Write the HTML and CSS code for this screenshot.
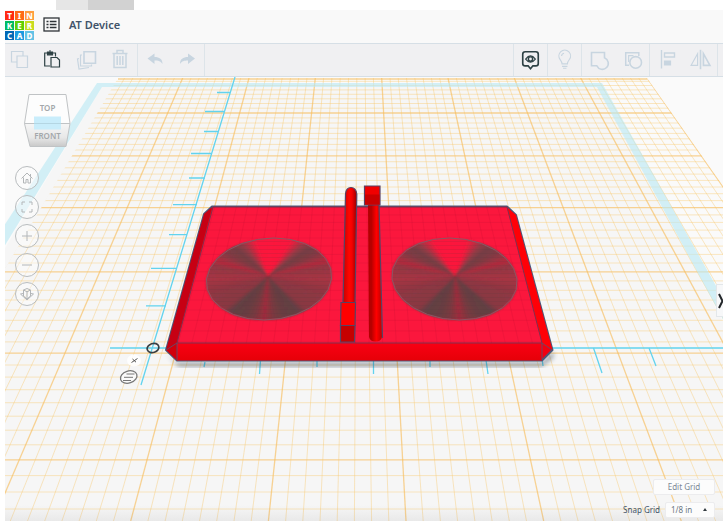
FILE: index.html
```html
<!DOCTYPE html>
<html lang="en">
<head>
<meta charset="utf-8">
<title>AT Device</title>
<link rel="stylesheet" href="styles.css">
</head>
<body>
<div class="tab-strip" aria-hidden="true"><span class="tab"></span><span class="tab tab-dark"></span></div>
<div class="app">
  <header class="header">
    <a class="logo" href="#" aria-label="Tinkercad">
      <span class="c1">T</span><span class="c2">I</span><span class="c3">N</span>
      <span class="c4">K</span><span class="c5">E</span><span class="c6">R</span>
      <span class="c7">C</span><span class="c8">A</span><span class="c9">D</span>
    </a>
    <button class="list-button" aria-label="Designs">
      <svg width="17" height="15" viewBox="0 0 17 15" fill="none" stroke="#2f3438"><rect x="1" y="1" width="15" height="13" stroke-width="1.3"/><path d="M3.5 4.5h2M3.5 7.5h2M3.5 10.5h2M6.8 4.5h6.7M6.8 7.5h6.7M6.8 10.5h6.7" stroke-width="1.6"/></svg>
    </button>
    <h1 class="title">AT Device</h1>
  </header>

  <div class="toolbar" role="toolbar" aria-label="Editing tools">
    <div class="group">
      <button class="tool" aria-label="Copy"><svg viewBox="0 0 33 32"><path d="M12 18H6.500V7.500H18V12M12 12h10.500v11.500H12z"/></svg></button>
      <button class="tool dark" aria-label="Paste"><svg viewBox="0 0 33 32"><path d="M12 22H6.700V9H9.500M14.500 9H17.500V12.500M13 13.500h6l2.500 2.500v7H13z"/><path d="M9.500 8h5v2.800h-5z" fill="currentColor"/><path d="M11 7h2"/></svg></button>
      <button class="tool" aria-label="Duplicate"><svg viewBox="0 0 33 32"><path d="M13 7.700h11.500v11.500H13z" stroke-width="1.600"/><path d="M11 11H9.500v11h11v-1.500M8 14.500L6.500 15l1.500 10 10-1.500"/></svg></button>
      <button class="tool" aria-label="Delete"><svg viewBox="0 0 33 32"><path d="M8.500 9.500h15M13 9V6.500h6V9M10 10v13.500h12V10M13.200 12v9M16 12v9M18.800 12v9" stroke-width="1.500"/></svg></button>
    </div>
    <div class="group">
      <button class="tool" aria-label="Undo"><svg viewBox="0 0 33 32"><path class="solid" d="M9.500 14.500L16.500 9.500v3.500c5 0 8 2 8 7-2-3-4-3.500-8-3.500v3.500z"/></svg></button>
      <button class="tool" aria-label="Redo"><svg viewBox="0 0 33 32"><path class="solid" d="M24 14.500L17 9.500v3.500c-5 0-8 2-8 7 2-3 4-3.500 8-3.500v3.500z"/></svg></button>
    </div>
    <div class="spacer"></div>
    <div class="group wide first">
      <button class="tool dark" aria-label="Show all"><svg viewBox="0 0 34 32"><path d="M11.500 7.500h11q2.500 0 2.500 2.500v9.500q0 2.500-2.500 2.500h-3L17 25l-2.500-3h-3Q9 22 9 19.500V10q0-2.500 2.500-2.500z" stroke-width="1.700"/><path d="M12 15q5-6.500 10 0-5 6.500-10 0z"/><circle cx="17" cy="15" r="2.200" stroke-width="1.500"/></svg></button>
    </div>
    <div class="group wide">
      <button class="tool" aria-label="Light"><svg viewBox="0 0 34 32"><path d="M14.500 20q0-2-2-4.500a6 6 0 1 1 9.500 0q-2 2.500-2 4.500zM14 12q0-2.500 2.500-3M14.500 22.500h5.500M15.500 24.500h3.500"/></svg></button>
    </div>
    <div class="group wide">
      <button class="tool" aria-label="Group"><svg viewBox="0 0 34 32"><path d="M9.500 8.500h13v5.300a6 6 0 1 1-7.700 8H9.500z" stroke-width="1.600"/></svg></button>
      <button class="tool" aria-label="Ungroup"><svg viewBox="0 0 34 32"><path d="M13.500 21.500H10v-13h13.500V12" stroke-width="1.500"/><path d="M13 18v-6.500h5" /><circle cx="20.300" cy="18.500" r="6" stroke-width="1.600"/></svg></button>
    </div>
    <div class="group wide">
      <button class="tool" aria-label="Align"><svg viewBox="0 0 34 32"><path d="M11.500 6v18.500M14.500 9h10v4h-10z" stroke-width="1.400"/><path d="M14.500 17h6v4h-6z" fill="currentColor"/></svg></button>
      <button class="tool" aria-label="Mirror"><svg viewBox="0 0 34 32"><path d="M14 9.500V21.500H7.300z"/><path d="M20 9.500V21.500H26.700z" stroke-width="1.700"/><path d="M17 5.500v20" stroke-width="1.700"/></svg></button>
    </div>
    <div class="tail"></div>
  </div>

  <main class="viewport">
    <svg class="scene" viewBox="5 77 718 444" preserveAspectRatio="xMidYMid slice" role="img" aria-label="Work plane with a red device">
      <defs>
        <linearGradient id="rod"><stop offset="0" stop-color="#c50000"/><stop offset=".45" stop-color="#ff0500"/><stop offset=".65" stop-color="#f40000"/><stop offset="1" stop-color="#970000"/></linearGradient>
        <linearGradient id="rod2"><stop offset="0" stop-color="#b00000"/><stop offset=".25" stop-color="#b80000"/><stop offset=".6" stop-color="#ff0000"/><stop offset="1" stop-color="#bd0000"/></linearGradient>
        <linearGradient id="front" x2="0" y2="1"><stop offset="0" stop-color="#f90014"/><stop offset="1" stop-color="#e60008"/></linearGradient>
        <linearGradient id="fade" x2="0" y2="1"><stop offset="0" stop-color="#888" stop-opacity="0"/><stop offset="1" stop-color="#888" stop-opacity=".12"/></linearGradient>
        <pattern id="stripes" width="9" height="4" patternUnits="userSpaceOnUse"><path d="M0 1.500h9" stroke="#4b3840" stroke-opacity=".13"/></pattern>
        <filter id="soft"><feGaussianBlur stdDeviation="2.500"/></filter>
        <filter id="blend"><feGaussianBlur stdDeviation="1"/></filter>
        <clipPath id="face"><path d="M213 207H507L542 343H177z"/></clipPath>
        <clipPath id="plane"><path d="M118 78H647L860 381V521H-144z"/></clipPath>
      </defs>
      <rect x="5" y="77" width="718" height="444" fill="#fafafa"/>
      <path d="M102 87H598L829 521H-159z" fill="#f6f6f6"/>
      <g id="grid" clip-path="url(#plane)"></g>
      <path d="M97 83H602L738 325H726L597 87H102L-4 260V238z" fill="#b9e9f3" fill-opacity=".62"/>
      <rect x="5" y="505" width="718" height="16" fill="url(#fade)"/>
      <g fill="none" stroke="#62d3ee" stroke-width="1.300">
        <path d="M235 77L141 385M217 92.500h13M205 111.500h20M204 131.500h15M191 153.500h21M189 178h16M173 204.700h24M169 234.700h18M151 268.300h26M146 305.800h20M110 348h613"/>
        <path d="M205 362l-1 5M260.500 360l-1 14M317 361v6M373.500 360v14M430 361v6M486 360l2 14M542 358l1 8M593.500 348l8.500 25M649 348l7 18"/>
      </g>
      <ellipse cx="153" cy="348" rx="6" ry="4.500" transform="rotate(-18 153 348)" fill="none" stroke="#3b3f42" stroke-width="1.700"/>
      <ellipse cx="134" cy="360.500" rx="7" ry="6" fill="#fff" fill-opacity=".85"/>
      <path d="M131.500 362.500l6-4M132.500 359l3.500 3.200" stroke="#555" fill="none"/>
      <g fill="none" stroke="#777"><ellipse cx="128.700" cy="377" rx="8.500" ry="6" transform="rotate(-18 128.700 377)" fill="#fafafa" stroke-width="1.300"/><path d="M126.500 374h8M124 377.300h9M123 380.500h8"/></g>

      <path d="M166 352L177 363H542L553 352V357L542 366H178z" fill="#28384c" opacity=".65" filter="url(#soft)"/>
      <g stroke="#4c5878" stroke-linejoin="round">
        <path d="M212 206.500L204 214 166 350 177 360.500H542L552.500 350 516 215 507 206.500z" fill="#f20010" stroke-width="2"/>
        <path d="M212 207L204 214 166 350 177 343z" fill="#c70013" stroke="none"/>
        <path d="M166 350l11-7v17.500z" fill="#d0000c" stroke="none"/>
        <path d="M177 343H542v17.500H177z" fill="url(#front)" stroke="none"/>
        <path d="M507 207l9 8 36.500 135-10.500-7z" fill="#ff0007" stroke="none"/>
        <path d="M213 207H507L542 343H177z" fill="#fb173d" stroke="#80304f"/>
        <path d="M166 350l11-7v17M552 350l-10-7v17" fill="none" stroke-width=".8"/>
      </g>
      <g id="face-grid" clip-path="url(#face)"></g>
      <g id="left-disc"></g>
      <g id="right-disc"></g>

      <g stroke="#574365" stroke-width="1.200">
        <path d="M343 303L345.500 194Q346 187.500 351 187.500T356.800 194L355 303z" fill="url(#rod)"/>
        <path d="M341 302.500H355.500L355 325.500H340.500z" fill="#ff0000"/>
        <path d="M340.500 325.500H355L354.500 342H340.500z" fill="#c60000"/>
        <path d="M368 204H379L382 337Q381 341.500 375.500 341.500T369 337z" fill="url(#rod2)" stroke="none"/>
        <path d="M379 204L382.500 338" fill="none"/>
        <path d="M364.500 186H380V205H364.500z" fill="#f00000"/>
        <path d="M365 194.500H379.500V204.500H365z" fill="#c90000" stroke="none"/>
      </g>
    </svg>

    <button class="view-cube" aria-label="View cube, top and front">
      <svg width="50" height="60" viewBox="0 0 50 60">
        <defs><linearGradient id="cube" x2="0" y2="1"><stop offset="0" stop-color="#f6f6f6"/><stop offset=".6" stop-color="#e8e8e8"/><stop offset="1" stop-color="#c9c9c9"/></linearGradient></defs>
        <path d="M11 3.500H48L52 32.500H6.500z" transform="translate(-4)" fill="#fdfdfd" stroke="#c0c3c5"/>
        <path d="M2.500 32.500H48L44 55.500H8z" fill="url(#cube)" stroke="#c0c3c5"/>
        <path d="M12 25.500h27v13H12z" fill="#c9edfb"/>
        <path d="M12 32.500h27" stroke="#b4d6e3"/>
        <text x="25.500" y="20" class="cube-text">TOP</text><text x="25.500" y="47.500" class="cube-text cube-front">FRONT</text>
      </svg>
    </button>
    <nav class="nav" aria-label="Camera">
      <button aria-label="Home view"><svg viewBox="0 0 24 24"><path d="M6.500 12.500l5.500-5.500 5.500 5.500M8.500 11.500V17H11v-3.500h2V17h2.500V11.500M15.500 10V8"/></svg></button>
      <button aria-label="Fit view"><svg viewBox="0 0 24 24"><path d="M7 10V7h3M14 7h3v3M17 14v3h-3M10 17H7v-3"/></svg></button>
      <button aria-label="Zoom in"><svg viewBox="0 0 24 24"><path d="M7 12h10M12 7v10"/></svg></button>
      <button aria-label="Zoom out"><svg viewBox="0 0 24 24"><path d="M7 12h10"/></svg></button>
      <button aria-label="Perspective view"><svg viewBox="0 0 24 24"><path d="M8.500 8L12 6.500 15.500 8v6L12 17l-3.500-3zM8.500 8L12 9.800 15.500 8M12 10v7M8 11.500L5.500 12l6.500 6 6.500-6-2.500-.5"/></svg></button>
    </nav>
    <button class="panel-toggle" aria-label="Show shapes panel"><svg width="6" height="18" viewBox="0 0 6 18"><path d="M2 2l3.500 7L2 16" fill="none" stroke="#23272a" stroke-width="2"/></svg></button>
    <div class="grid-controls">
      <button class="edit-grid">Edit Grid</button>
      <div class="snap">
        <label for="snap">Snap Grid</label>
        <span class="select-wrap"><select id="snap"><option>1/8 in</option></select></span>
      </div>
    </div>
  </main>
</div>
<script src="scene.js"></script>
</body>
</html>
```
FILE: styles.css
```css
* { box-sizing: border-box; }

body {
  margin: 0;
  min-height: 100vh;
  padding: 0 4px 4px 5px;
  display: flex;
  flex-direction: column;
  background: #fff;
  font-family: "Noto Sans", sans-serif;
  color: #40536a;
}

button {
  margin: 0;
  padding: 0;
  border: 0;
  background: none;
  font: inherit;
  color: inherit;
  cursor: pointer;
}

svg { display: block; }

.tab-strip {
  display: flex;
  height: 10px;
  padding-left: 51px;
}
.tab { width: 32px; background: #e6e6e6; }
.tab-dark { width: 46px; background: #d2d2d2; }

.app {
  flex: 1;
  display: flex;
  flex-direction: column;
}

.header {
  display: flex;
  align-items: center;
  height: 33px;
  background: #f9f9f9;
}

.logo {
  display: grid;
  grid-template-columns: repeat(3, 9px);
  grid-auto-rows: 9px;
  gap: 1px;
  margin-bottom: 2px;
  color: #fff;
  font-size: 8px;
  font-weight: 800;
  line-height: 9px;
  text-align: center;
  text-decoration: none;
}
.c1 { background: #ff2b12; }
.c2 { background: #ff6a16; }
.c3 { background: #ff9d3c; }
.c4 { background: #00bb63; }
.c5 { background: #60cf05; }
.c6 { background: #c8dc20; }
.c7 { background: #0067b5; }
.c8 { background: #1c9be0; }
.c9 { background: #62c2e6; }

.list-button { margin: 0 9px 4px 9px; }

.title {
  margin: 0 0 4px;
  font-size: 11px;
  line-height: 16px;
  font-weight: 600;
}

.toolbar {
  display: flex;
  height: 34px;
  background: #f0f0f2;
  border-top: 1px solid #d6dfe6;
  border-bottom: 1px solid #d6dfe6;
}
.group {
  display: flex;
  border-right: 1px solid #dde4e9;
}
.group .tool { width: 33px; color: #c8d5e0; }
.group .dark { color: #2d4144; }
.first { border-left: 1px solid #dde4e9; }
.wide .tool:last-child { width: 33px; }
.wide .tool:not(:last-child) { width: 34px; }
.spacer { flex: 1; }
.tail { width: 5px; }

.tool svg {
  width: 100%;
  height: 32px;
  fill: none;
  stroke: currentColor;
  stroke-width: 1.2;
}
.tool .solid { fill: currentColor; stroke: none; }

.viewport {
  position: relative;
  flex: 1;
  min-height: 300px;
  overflow: hidden;
}
.scene {
  position: absolute;
  inset: 0;
  width: 100%;
  height: 100%;
}
.minor { stroke: #f9c76e; stroke-opacity: .42; fill: none; }
.major { stroke: #f7bd5c; stroke-opacity: .65; stroke-width: 1.3; fill: none; }
.face-line { stroke: #a5102d; stroke-opacity: .13; fill: none; }
.disc-edge { fill: url(#stripes); stroke: #8a5663; }
.wedges { filter: url(#blend); }

.view-cube {
  position: absolute;
  left: 17px;
  top: 14px;
}
.cube-text {
  font: 600 8px "Noto Sans", sans-serif;
  fill: #a3a7aa;
  text-anchor: middle;
}
.cube-front { font-size: 8px; }

.nav {
  position: absolute;
  left: 10px;
  top: 89px;
  display: flex;
  flex-direction: column;
  gap: 5px;
}
.nav button {
  width: 24px;
  height: 24px;
  border: 1px solid #b9bdbf;
  border-radius: 50%;
  background: rgba(252, 252, 252, .5);
}
.nav svg {
  margin: -1px;
  width: 24px;
  height: 24px;
  fill: none;
  stroke: #b3b6b8;
}

.panel-toggle {
  position: absolute;
  right: 0;
  top: 207px;
  width: 7px;
  height: 33px;
  background: #f7f8f9;
  border: 1px solid #e3e7ea;
  border-right: 0;
}

.grid-controls {
  position: absolute;
  right: 8px;
  bottom: 3px;
  display: flex;
  flex-direction: column;
  align-items: flex-end;
  gap: 7px;
  font-size: 8px;
  line-height: 14px;
}
.edit-grid, .select-wrap {
  border: 1px solid #ececee;
  background: #fcfcfc;
  border-radius: 2px;
}
.edit-grid { width: 62px; height: 16px; color: #7b8896; }
.snap { display: flex; align-items: center; gap: 5px; }
.select-wrap {
  position: relative;
  width: 50px;
  height: 16px;
}
.select-wrap::after {
  content: "";
  position: absolute;
  right: 7px;
  top: 5px;
  border: 2px solid transparent;
  border-top: 0;
  border-bottom: 3px solid #333b40;
}
select {
  display: block;
  width: 100%;
  height: 14px;
  padding: 0 0 0 5px;
  border: 0;
  appearance: none;
  background: none;
  font: inherit;
  color: #6a7784;
}
```
FILE: scene.js
```js
const NS = "http://www.w3.org/2000/svg";
const HORIZON = -334;
const VANISH_X = 359;
const PER_UNIT = 8;

function add(parent, tag, attrs) {
  const node = document.createElementNS(NS, tag);
  for (const key in attrs) node.setAttribute(key, attrs[key]);
  parent.appendChild(node);
  return node;
}

// Rows and columns of the work plane, projected towards the vanishing point.
function drawGrid(parent, faceOnly) {
  for (let i = -7; i <= 48; i++) {
    const y = HORIZON + 1 / (0.0022371 - 0.0001955 * i / PER_UNIT);
    const major = i % PER_UNIT === 0;
    add(parent, "path", { d: `M-200 ${y.toFixed(1)}H900`, class: faceOnly ? "face-line" : major ? "major" : "minor" });
  }
  for (let i = 0; i <= 64; i++) {
    const slope = -0.589 + 0.161 * i / PER_UNIT;
    const x1 = VANISH_X + slope * (78 - HORIZON);
    const x2 = VANISH_X + slope * (521 - HORIZON);
    const major = i % PER_UNIT === 0;
    add(parent, "path", { d: `M${x1.toFixed(1)} 78L${x2.toFixed(1)} 521`, class: faceOnly ? "face-line" : major ? "major" : "minor" });
  }
  if (!faceOnly) add(parent, "path", { d: "M118 79H647", class: "major" });
}

// Shade of the disc by angle from the top, in degrees.
const SHADES = [
  [0, 252, 24, 60], [17, 250, 25, 60], [30, 150, 58, 70], [38, 116, 62, 68],
  [50, 130, 58, 68], [57, 155, 52, 66], [64, 182, 40, 60], [71, 145, 56, 68],
  [90, 168, 52, 68], [105, 148, 54, 66], [118, 140, 56, 68], [138, 138, 56, 66],
  [146, 98, 64, 68], [160, 104, 62, 66], [170, 120, 58, 64], [180, 158, 44, 60]
];

function shade(angle) {
  const a = Math.min(angle, 360 - angle);
  const k = Math.max(1, SHADES.findIndex(s => s[0] >= a));
  const p = SHADES[k - 1], q = SHADES[k];
  const t = (a - p[0]) / (q[0] - p[0]);
  return `rgb(${[1, 2, 3].map(c => Math.round(p[c] + (q[c] - p[c]) * t)).join()})`;
}

function drawDisc(parent, cx, hubX, skew) {
  const point = deg => {
    const r = deg * Math.PI / 180;
    return [cx + 62.5 * Math.sin(r) + skew * Math.cos(r), 279 - 41 * Math.cos(r)];
  };
  const outline = [];
  add(parent, "ellipse", { cx, cy: 279, rx: 61, ry: 40, fill: "#a83a4a" });
  const wedges = add(parent, "g", { class: "wedges" });
  for (let a = 0; a < 360; a += 3) {
    const [x1, y1] = point(a - 1.5), [x2, y2] = point(a + 3);
    add(wedges, "path", { d: `M${hubX} 276L${x1} ${y1}L${x2} ${y2}z`, fill: shade(a) });
  }
  for (let a = 0; a < 360; a += 15) outline.push(point(a).join());
  add(parent, "polygon", { points: outline.join(" "), class: "disc-edge" });
}

drawGrid(document.getElementById("grid"), false);
drawGrid(document.getElementById("face-grid"), true);
drawDisc(document.getElementById("left-disc"), 269, 268, 5);
drawDisc(document.getElementById("right-disc"), 454.5, 455, -5);
```
